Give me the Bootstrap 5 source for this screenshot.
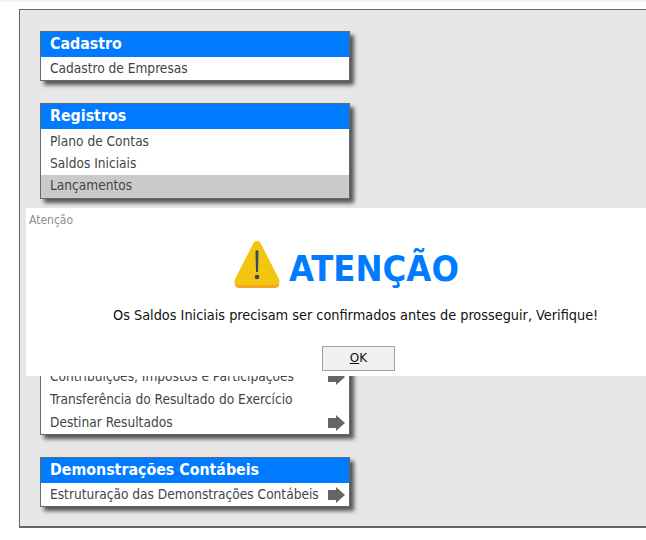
<!DOCTYPE html>
<html lang="pt-BR">
<head>
    <meta charset="UTF-8">
    <title>Atenção</title>
    <link href="https://cdn.jsdelivr.net/npm/bootstrap@5.3.3/dist/css/bootstrap.min.css" rel="stylesheet">
    <style>
        html, body { height: 540px; overflow: hidden; }
        body { background: #fff; font-family: "DejaVu Sans", sans-serif; font-stretch: condensed; border-top: 2px solid #f2f2f2; position: relative; }
        .painel { margin: 7px 0 0 19px; height: 519px; background: #e7e7e7; border: 1px solid #666; border-width: 1px 0 2px 1px; padding: 21px 0 0 20px; }
        .caixa { width: 310px; border: 1px solid #5f6a72; border-radius: 0; box-shadow: 4px 4px 4px #555; margin-bottom: 22px; background: #fff; }
        .caixa .card-header { background: #007bff; color: #fff; font-weight: 700; font-size: 15.8px; line-height: 24px; height: 25px; padding: 0 9px; border: 0; border-radius: 0; }
        .caixa .list-group-item { border: 0; border-radius: 0; padding: 0 4px 0 9px; color: #444; font-size: 13.6px; line-height: 23px; height: 23px; background: transparent; }
        .caixa .list-group-item.atual { background: #cacaca; line-height: 21px; }
        .caixa .list-group-item.desce { line-height: 25px; }
        .vao-oculto { height: 142px; }
        .seta { width: 17px; height: 16px; fill: #666; }
        .aviso { position: absolute; left: 26px; top: 206px; width: 620px; height: 168px; background: #fff; }
        .aviso-rotulo { font-size: 12px; color: #8d8d8d; line-height: 14px; padding: 5px 0 0 3px; }
        .aviso-cabeca { margin: 12px 0 0 207px; }
        .aviso-titulo { color: #007bff; font-weight: 700; font-size: 36px; line-height: 50px; margin-top: 5px; }
        .aviso-msg { font-size: 14.35px; color: #111; line-height: 20px; margin: 11px 0 0 87px; }
        .botao-ok { display: block; width: 73px; height: 25px; padding: 0; border: 1px solid #a0a0a0; border-radius: 0; background: #f0f0f0; color: #111; font-size: 12px; line-height: 23px; margin: 21px 0 0 296px; }
    </style>
</head>
<body>
<div class="painel">
    <div class="card caixa">
        <div class="card-header">Cadastro</div>
        <div class="list-group list-group-flush">
            <div class="list-group-item">Cadastro de Empresas</div>
        </div>
    </div>
    <div class="card caixa">
        <div class="card-header">Registros</div>
        <div class="list-group list-group-flush">
            <div class="list-group-item desce">Plano de Contas</div>
            <div class="list-group-item">Saldos Iniciais</div>
            <div class="list-group-item atual">Lançamentos</div>
        </div>
    </div>
    <div class="card caixa">
        <!-- fica atrás do aviso -->
        <div class="vao-oculto"></div>
        <div class="list-group list-group-flush">
            <div class="list-group-item d-flex justify-content-between align-items-center">Contribuições, Impostos e Participações
                <svg class="seta" viewBox="0 0 17 16"><path d="M0 3h8V0l9 8-9 8v-3H0z"/></svg></div>
            <div class="list-group-item">Transferência do Resultado do Exercício</div>
            <div class="list-group-item d-flex justify-content-between align-items-center">Destinar Resultados
                <svg class="seta" viewBox="0 0 17 16"><path d="M0 3h8V0l9 8-9 8v-3H0z"/></svg></div>
        </div>
    </div>
    <div class="card caixa">
        <div class="card-header">Demonstrações Contábeis</div>
        <div class="list-group list-group-flush">
            <div class="list-group-item d-flex justify-content-between align-items-center">Estruturação das Demonstrações Contábeis
                <svg class="seta" viewBox="0 0 17 16"><path d="M0 3h8V0l9 8-9 8v-3H0z"/></svg></div>
        </div>
    </div>
</div>

<div class="aviso">
    <div class="aviso-rotulo">Atenção</div>
    <div class="aviso-cabeca d-flex align-items-start gap-2">
        <svg width="48" height="50" viewBox="0 0 48 50">
            <path d="M24 3 L45 43 Q46 48 42 48 H6 Q2 48 3 43 Z" fill="#f5a623" stroke="#f5a623" stroke-width="2" stroke-linejoin="round"/>
            <path d="M24 2 C26 2 27 3 28 5 L46 40 Q48 46 42 46 H6 Q0 46 2 40 L20 5 C21 3 22 2 24 2 Z" fill="#f3c510"/>
            <path d="M22.5 12 Q24 10.5 25.5 12 L25 33 H23 Z" fill="#34495e"/>
            <circle cx="24" cy="38" r="2.3" fill="#34495e"/>
        </svg>
        <div class="aviso-titulo">ATENÇÃO</div>
    </div>
    <div class="aviso-msg">Os Saldos Iniciais precisam ser confirmados antes de prosseguir, Verifique!</div>
    <button class="btn botao-ok" type="button"><u>O</u>K</button>
</div>

<script src="https://cdn.jsdelivr.net/npm/bootstrap@5.3.3/dist/js/bootstrap.bundle.min.js"></script>
</body>
</html>
